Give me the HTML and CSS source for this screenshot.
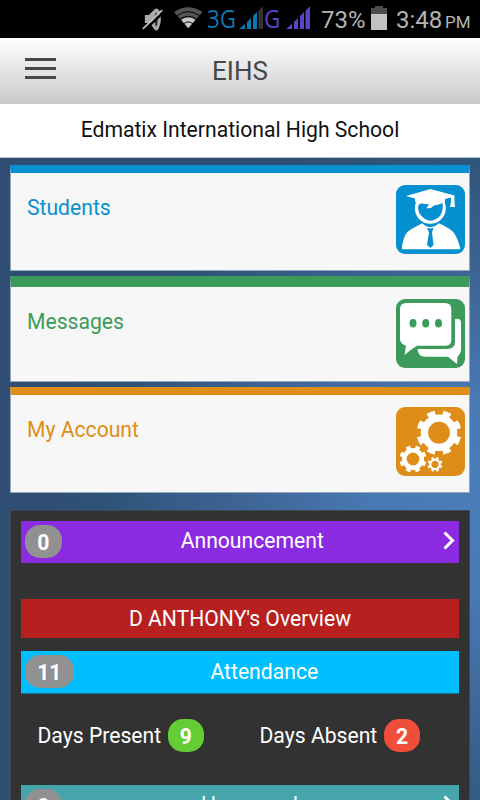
FILE: index.html
```html
<!DOCTYPE html>
<html lang="en">
<head>
  <meta charset="UTF-8">
  <meta name="viewport" content="width=device-width, initial-scale=1.0">
  <title>EIHS</title>
  <link rel="stylesheet" href="styles.css">
</head>
<body>
  <div class="status-bar">
    <svg class="status-icons" viewBox="0 0 74 38">
      <path d="M11 15h4l6-6q3-2 5 2q3 9-1 18q-2 3-4 1l-5-7h-5z" fill="#aaa" />
      <ellipse cx="22.500" cy="19.500" rx="1.500" ry="7" fill="#333" />
      <path d="M11 30L30 12" stroke="#000" stroke-width="2.500" />
      <path d="M9 29L28.500 10" stroke="#bebebe" stroke-width="1.800" />
      <path d="M40.500 12Q55 2 69.500 12L55 28.500z" fill="#555" />
      <path d="M48 20Q55 15 62 20L55 28.500z" fill="#c8c8c8" />
      <path d="M43 16Q55 7 67 16M46 19.500Q55 13 64 19.500M50 24Q55 20 60 24" fill="none" stroke="#000" />
    </svg>
    <span class="network blue">3G</span>
    <svg class="signal" viewBox="0 0 25 24" fill="#0b78b0">
      <path d="M0 23L6 18V23zM8 16L12 12V23H8zM14 10L18 6V23H14z" />
      <path d="M19.500 5L24 0V23H19.500z" fill="#333" />
    </svg>
    <span class="network purple">G</span>
    <svg class="signal second" viewBox="0 0 25 24" fill="#5a45c8">
      <path d="M0 23L6 18V23zM8 16L12 12V23H8zM14 10L18 6V23H14zM19.500 5L24 0V23H19.500z" />
    </svg>
    <span class="percent">73%</span>
    <svg class="battery" viewBox="0 0 16 24">
      <path d="M0 2H4V0H12V2H16V8H0z" fill="#4c4c4c" />
      <path d="M0 8H16V24H0z" fill="#c2c2c2" />
    </svg>
    <span class="clock">3:48</span>
    <span class="meridiem">PM</span>
  </div>

  <header class="header">
    <button class="menu" aria-label="Menu">
      <span></span>
      <span></span>
      <span></span>
    </button>
    <h1>EIHS</h1>
  </header>
  <div class="school">Edmatix International High School</div>

  <main class="content">
    <a class="card students">
      <span class="card-title">Students</span>
      <svg class="card-icon" viewBox="0 0 69 69">
        <rect width="69" height="69" rx="9" fill="#0590d2" />
        <circle cx="34.300" cy="23.300" r="15.500" fill="#fff" />
        <path d="M22 22Q23 18 26 18.500Q31 19.500 33 19Q32 21 30.500 23Q35 24 38 20.500Q42 20 46.500 18Q48 27 42.500 32.500Q34 39 26.500 32Q22 28 22 22z" fill="#0590d2" />
        <path d="M10 11L34.500 4L58.500 10.500V17L59 22H54L55 17V12.500L49 14V17Q34 12 19 17V13.500z" fill="#fff" />
        <path d="M6 64.300V61Q8 51 11 47.500Q13 45 26.300 38.300Q34 46 43 38.300Q55 44 58 48Q61 52 64 62V64.300z" fill="#fff" />
        <path d="M31 42.800Q34.300 44 37.500 42.800L36 47.500L37.500 60L34.300 63L31 60L33 47.500z" fill="#0590d2" />
      </svg>
    </a>
    <a class="card messages">
      <span class="card-title">Messages</span>
      <svg class="card-icon" viewBox="0 0 69 69">
        <rect width="69" height="69" rx="9" fill="#3c9b5b" />
        <path d="M10 4H49Q55.300 4 55.300 10V41Q55.300 46.700 50 46.700H21Q14 51 8.500 56L10 46.700Q4 44.500 4 40V10Q4 4 10 4z" fill="#fff" />
        <path d="M59 20Q65 19 65 24V50Q65 55 61.500 57.500L61 65L52 57.700H29Q22 57.500 21.500 50H51Q59 50 59 43z" fill="#fff" />
        <g fill="#3c9b5b">
          <ellipse cx="17" cy="24.300" rx="3.500" ry="4.300" />
          <ellipse cx="29.700" cy="24.300" rx="3.500" ry="4.300" />
          <ellipse cx="42.500" cy="24.300" rx="3.500" ry="4.300" />
        </g>
      </svg>
    </a>
    <a class="card account">
      <span class="card-title">My Account</span>
      <svg class="card-icon" viewBox="0 0 69 69">
        <rect width="69" height="69" rx="9" fill="#de8e18" />
        <g fill="none" stroke="#fff">
          <circle cx="43" cy="25.700" r="14.600" stroke-width="7.400" />
          <circle cx="43" cy="25.700" r="19.200" stroke-width="6.400" pathLength="16" stroke-dasharray="1 1" transform="rotate(11.250 43 25.700)" />
          <circle cx="17" cy="52" r="8.700" stroke-width="4.600" />
          <circle cx="17" cy="52" r="11.400" stroke-width="4.200" pathLength="16" stroke-dasharray="1 1" transform="rotate(11.250 17 52)" />
          <circle cx="39" cy="57.300" r="4.700" stroke-width="2.200" />
          <circle cx="39" cy="57.300" r="6.300" stroke-width="2.400" pathLength="16" stroke-dasharray="1 1" transform="rotate(11.250 39 57.300)" />
        </g>
      </svg>
    </a>

    <section class="panel">
      <div class="bar announcement">
        <span class="badge">0</span>
        <span class="bar-title">Announcement</span>
        <svg class="arrow" viewBox="0 0 12 20"><path d="M1.500 1.500L9.500 9.500L1.500 17.500" /></svg>
      </div>
      <div class="overview">D ANTHONY's Overview</div>
      <div class="bar attendance">
        <span class="badge">11</span>
        <span class="bar-title">Attendance</span>
      </div>
      <div class="days">
        <div class="day">Days Present <span class="badge present">9</span></div>
        <div class="day">Days Absent <span class="badge absent">2</span></div>
      </div>
      <div class="bar homework">
        <span class="badge">0</span>
        <span class="bar-title">Homework</span>
        <svg class="arrow" viewBox="0 0 12 20"><path d="M1.500 1.500L9.500 9.500L1.500 17.500" /></svg>
      </div>
    </section>
  </main>
</body>
</html>
```

FILE: styles.css
```css
* {
	box-sizing: border-box;
}

body {
	margin: 0;
	height: 800px;
	overflow: hidden;
	font-family: Roboto, "Liberation Sans", sans-serif;
	font-size: 21.15px;
	line-height: 26px;
	background: radial-gradient(ellipse 430px 400px at 100% 500px, #4a7db9 0%, #4979b3 25%, #3c6291 60%, #2e5275 90%, #304e74 100%);
}

svg {
	display: block;
	flex: none;
}

.status-bar {
	display: flex;
	height: 38px;
	background: #000;
	padding-left: 134px;
	color: #b4b4b4;
	line-height: 40px;
	white-space: nowrap;
}

.status-icons {
	width: 73px;
	height: 38px;
}

.network {
	font-family: "Open Sans", sans-serif;
	font-size: 26px;
	line-height: 36px;
	transform: scaleX(0.86);
	transform-origin: left;
}

.blue {
	width: 32px;
	color: #0b78b0;
}

.purple {
	width: 22px;
	color: #5a45c8;
}

.signal {
	width: 25px;
	height: 24px;
	margin-top: 6px;
}

.second {
	margin-right: 10px;
}

.percent {
	width: 50px;
	font-size: 24px;
}

.battery {
	width: 16px;
	height: 24px;
	margin-top: 6px;
}

.clock {
	width: 49px;
	margin-left: 9px;
	font-size: 24px;
}

.meridiem {
	font-size: 17px;
	line-height: 44px;
}

.header {
	display: grid;
	grid-template-columns: 80px 1fr 80px;
	height: 66px;
	background: linear-gradient(#fff, #c9c9c9);
}

.menu {
	display: flex;
	flex-direction: column;
	gap: 6px;
	padding: 20px 0 0 25px;
	border: 0;
	background: none;
}

.menu span {
	width: 31px;
	height: 3px;
	background: #484848;
}

h1 {
	margin: 0;
	font-size: 26px;
	font-weight: 400;
	line-height: 66px;
	text-align: center;
	color: #484848;
}

.school {
	height: 54px;
	border-bottom: 1px solid #b8c3d0;
	background: #fff;
	line-height: 52px;
	text-align: center;
	color: #111;
}

.content {
	padding: 7px 10px 0;
}

.card {
	display: flex;
	justify-content: space-between;
	height: 106px;
	margin-bottom: 5px;
	padding: 0 4px 0 16px;
	border: 1px solid #94a8bf;
	border-top: 8px solid;
	background: #f7f7f7;
	background-clip: padding-box;
}

.card-title {
	padding-top: 22px;
}

.card-icon {
	width: 69px;
	height: 69px;
	margin-top: 12px;
}

.students {
	border-top-color: #0590d2;
	color: #0590d2;
}

.messages {
	border-top: 11px solid #3c9b5b;
	color: #3c9b5b;
}

.account {
	border-top-color: #de8e18;
	color: #de8e18;
}

.panel {
	height: 310px;
	margin-top: 17px;
	padding: 10px;
	border: 1px solid #3b4956;
	background: #323232;
	color: #fff;
}

.bar {
	display: flex;
	height: 42px;
	padding-top: 4px;
}

.bar-title {
	flex: 1;
	padding-top: 3px;
	text-align: center;
}

.badge {
	display: inline-block;
	flex: none;
	height: 33px;
	margin-left: 4px;
	padding: 0 12.2px;
	border-radius: 15px;
	background: #919191;
	font-weight: 700;
	line-height: 35px;
}

.arrow {
	width: 12px;
	height: 20px;
	margin-top: 6px;
	margin-right: 4px;
	fill: none;
	stroke: #fff;
	stroke-width: 3;
}

.announcement {
	background: #8a2be2;
}

.overview {
	height: 39px;
	margin: 36px 0 13px;
	background: #b82020;
	line-height: 40px;
	text-align: center;
}

.attendance {
	height: 43px;
	padding-right: 4px;
	border-bottom: 1px solid #1b7798;
	background: #00bfff;
}

.attendance .bar-title {
	padding-top: 4px;
}

.days {
	display: grid;
	grid-template-columns: 222px 1fr;
	height: 91px;
	padding: 25px 0 0 16.5px;
}

.day {
	display: flex;
	line-height: 34px;
}

.day .badge {
	margin-left: 6.5px;
}

.present {
	background: #66cc33;
}

.absent {
	background: #f04e3a;
}

.homework {
	background: #45a5aa;
}
```
